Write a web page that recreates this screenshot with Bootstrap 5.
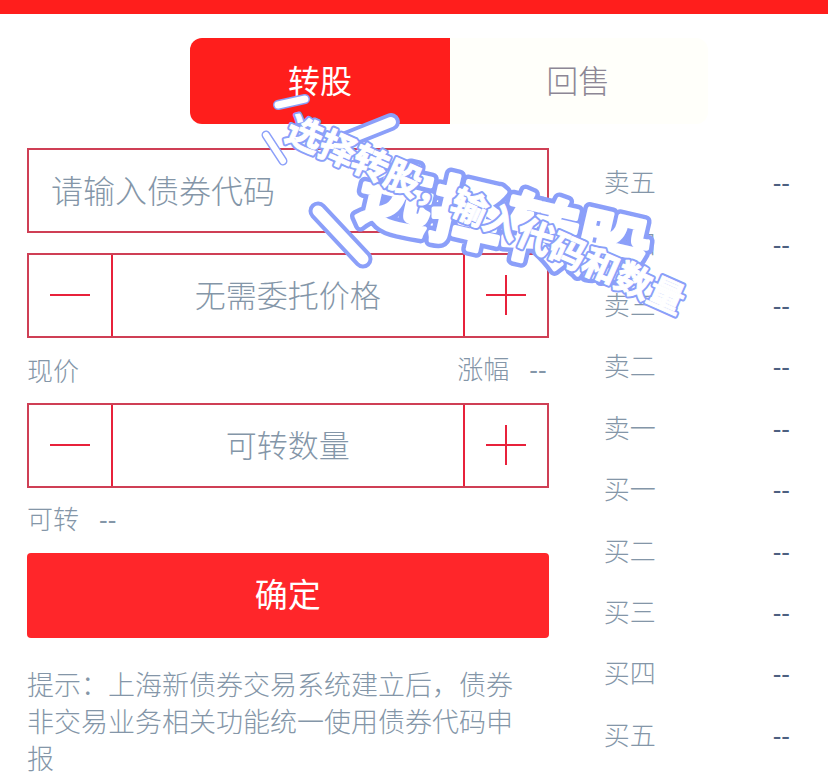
<!DOCTYPE html>
<html lang="zh-CN">
<head>
<meta charset="utf-8">
<meta name="viewport" content="width=device-width, initial-scale=1">
<title>转股</title>
<link href="https://cdn.jsdelivr.net/npm/bootstrap@5.3.0/dist/css/bootstrap.min.css" rel="stylesheet">
<style>
body{font-family:"Noto Sans CJK SC",sans-serif;font-weight:300;color:#8496a8;background:#fff}
.topline{height:14px;background:#ff1e1c}
.switcher{margin:24px 14.5% 24px 23%;height:86px}
.switcher .btn{border:0;padding:0 0 4px;font-size:32px;font-weight:300;background:#fffffa;color:#8d8795;border-radius:12px}
.switcher .btn.active{background:#ff1e1c;color:#fff;font-weight:400}
.trade{display:grid;grid-template-columns:14fr 5fr;column-gap:55px;padding:0 38px 0 27px}
.field{height:85px;border:2px solid #cf3f55;border-radius:0;font-size:31px;font-weight:300;color:#8496a8;background:#fff}
.field::placeholder,.stepper input::placeholder{color:#8496a8;opacity:1}
.code{margin-bottom:20px;padding:0 22px 4px;font-size:32px}
.stepper button{width:84px;border:0;background:none;padding:0 0 2px;color:#e8213b}
.stepper button:first-child{border-right:2px solid #e8213b}
.stepper button:last-child{border-left:2px solid #e8213b}
.stepper input{min-width:0;border:0;padding:0 0 2px;background:none;text-align:center;font-weight:300;color:#8496a8}
.info{height:65px;padding:0 2px 3px 0;font-size:26px}
.dash{font-family:"Liberation Sans",sans-serif;font-weight:400}
.info .dash{margin-left:20px}
.submit{height:85px;padding:0 0 4px;font-size:33px;border:0;border-radius:4px;background:#ff262a;color:#fff}
.hint{font-size:27px;line-height:37px;margin-top:27px;padding-right:20px}
.quotes{font-size:26px;margin-top:5px;height:614px}
.quotes th,.quotes td{padding:0;font-weight:300}
.quotes th{padding-bottom:6px}
.quotes td{color:#4d5f80;text-align:right}
.sticker{position:absolute;left:0;top:0;z-index:5;pointer-events:none;font-family:"Noto Sans CJK SC",sans-serif;font-weight:700}
.edge{fill:#8b9ff9;stroke:#8b9ff9;stroke-linejoin:round}
.face{fill:#fff;stroke:#fff;stroke-linejoin:round}
</style>
<script src="https://cdn.jsdelivr.net/npm/bootstrap@5.3.0/dist/js/bootstrap.bundle.min.js"></script>
</head>
<body class="position-relative">
<header class="topline"></header>
<nav class="switcher btn-group d-flex" aria-label="业务">
  <button type="button" class="btn active w-50">转股</button>
  <button type="button" class="btn w-50">回售</button>
</nav>
<main class="trade">
  <form>
    <input class="field code w-100 d-block" type="text" placeholder="请输入债券代码" aria-label="债券代码">
    <div class="field stepper d-flex">
      <button type="button" aria-label="减少价格"><svg class="d-block mx-auto" width="42" height="42" stroke="currentColor" stroke-width="2"><path d="M1 21H41"/></svg></button>
      <input class="flex-fill" type="text" placeholder="无需委托价格" aria-label="委托价格">
      <button type="button" aria-label="增加价格"><svg class="d-block mx-auto" width="42" height="42" stroke="currentColor" stroke-width="2"><path d="M1 21H41M21 1V41"/></svg></button>
    </div>
    <div class="info d-flex align-items-center justify-content-between"><span>现价</span><span>涨幅<span class="dash">--</span></span></div>
    <div class="field stepper d-flex">
      <button type="button" aria-label="减少数量"><svg class="d-block mx-auto" width="42" height="42" stroke="currentColor" stroke-width="2"><path d="M1 21H41"/></svg></button>
      <input class="flex-fill" type="text" placeholder="可转数量" aria-label="可转数量">
      <button type="button" aria-label="增加数量"><svg class="d-block mx-auto" width="42" height="42" stroke="currentColor" stroke-width="2"><path d="M1 21H41M21 1V41"/></svg></button>
    </div>
    <div class="info d-flex align-items-center"><span>可转<span class="dash">--</span></span></div>
    <button type="button" class="btn submit w-100">确定</button>
    <p class="hint mb-0">提示：上海新债券交易系统建立后，债券非交易业务相关功能统一使用债券代码申报</p>
  </form>
  <table class="quotes w-100 align-self-start">
    <tbody>
      <tr><th scope="row">卖五</th><td class="dash">--</td></tr>
      <tr><th scope="row">卖四</th><td class="dash">--</td></tr>
      <tr><th scope="row">卖三</th><td class="dash">--</td></tr>
      <tr><th scope="row">卖二</th><td class="dash">--</td></tr>
      <tr><th scope="row">卖一</th><td class="dash">--</td></tr>
      <tr><th scope="row">买一</th><td class="dash">--</td></tr>
      <tr><th scope="row">买二</th><td class="dash">--</td></tr>
      <tr><th scope="row">买三</th><td class="dash">--</td></tr>
      <tr><th scope="row">买四</th><td class="dash">--</td></tr>
      <tr><th scope="row">买五</th><td class="dash">--</td></tr>
    </tbody>
  </table>
</main>
<svg class="sticker" width="720" height="340" viewBox="0 0 720 340">
  <defs>
    <text id="big" font-size="74">选择转股</text>
    <text id="note" font-size="36">选择转股，输入代码和数量</text>
  </defs>
  <g stroke-linecap="round">
    <path d="M278 105L305 99" stroke="#8b9ff9" stroke-width="10"/><path d="M278 105L305 99" stroke="#fff" stroke-width="7"/>
    <path d="M266 135L283 161" stroke="#8b9ff9" stroke-width="9"/><path d="M266 135L283 161" stroke="#fff" stroke-width="6"/>
    <path d="M346 140L391 122" stroke="#8b9ff9" stroke-width="18"/><path d="M346 140L391 122" stroke="#fff" stroke-width="10"/>
    <path d="M318 211L363 259" stroke="#8b9ff9" stroke-width="19"/><path d="M318 211L363 259" stroke="#fff" stroke-width="11"/>
  </g>
  <g transform="translate(354 216) rotate(13)">
    <use href="#big" class="edge" stroke-width="13"/><use href="#big" class="face" stroke-width="4"/>
  </g>
  <g transform="translate(283 139) rotate(24)">
    <use href="#note" class="edge" stroke-width="5"/><use href="#note" class="face" stroke-width="1"/>
  </g>
</svg>
</body>
</html>
